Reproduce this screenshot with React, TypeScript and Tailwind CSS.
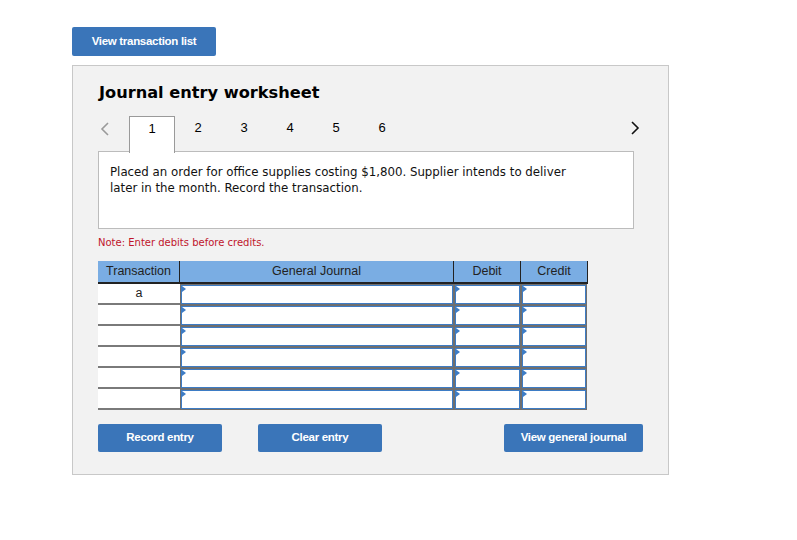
import React from 'react'

const TABS = [1, 2, 3, 4, 5, 6]
const ROWS = ['a', '', '', '', '', '']

const btn =
  'flex h-[28px] items-center justify-center rounded-[2px] bg-[#3a75b9] text-[11.5px] font-bold tracking-[-0.3px] text-white'

function InputCell({ w }: { w: string }) {
  return (
    <div className={`relative h-full ${w} border border-[#6f6f6f]`}>
      <div className="h-full w-full border-[1.5px] border-[#3d7cc5] bg-white" />
      <span className="absolute left-[1px] top-[1px] h-0 w-0 border-y-[3px] border-l-[4px] border-y-transparent border-l-[#3d7cc5]" />
    </div>
  )
}

export default function App() {
  return (
    <div className="min-h-screen bg-white pl-[72px] pt-[27px] font-['Liberation_Sans',Arial,sans-serif]">
      <button className={`${btn} h-[29px] w-[144px]`}>View transaction list</button>

      <div className="mt-[9px] h-[410px] w-[597px] border border-[#c8c8c8] bg-[#f2f2f2] pl-[25px] pt-[16px]">
        <h1 className="ml-px font-['DejaVu_Sans',Verdana,sans-serif] text-[16.2px] font-bold leading-[22px] text-black">
          Journal entry worksheet
        </h1>

        <div className="mt-[12px] flex h-[37px] w-[542px] items-center">
          <div className="mb-[12px] flex w-[31px] items-center pl-[2px]">
            <svg width="10" height="14" viewBox="0 0 10 14">
              <polyline points="8,1 2,7 8,13" fill="none" stroke="#9a9a9a" strokeWidth="1.6" />
            </svg>
          </div>
          {TABS.map((t) => (
            <div
              key={t}
              className={`flex h-[37px] w-[46px] items-center justify-center pb-[13px] text-[13px] text-black ${
                t === 1 ? 'relative z-10 border-x border-t border-[#9a9a9a] bg-white' : ''
              }`}
            >
              {t}
            </div>
          ))}
          <div className="flex-1" />
          <svg width="10" height="14" viewBox="0 0 10 14" className="mb-[13px]">
            <polyline points="2,1 8,7 2,13" fill="none" stroke="#111" strokeWidth="1.6" />
          </svg>
        </div>

        <div className="-mt-[2px] h-[78px] w-[536px] border border-[#bcbcbc] bg-white px-[11px] pt-[12px] font-['DejaVu_Sans',Verdana,sans-serif] text-[11.8px] leading-[16px] text-[#111]">
          Placed an order for office supplies costing $1,800. Supplier intends to deliver
          <br />
          later in the month. Record the transaction.
        </div>

        <p className="mt-[8px] font-['DejaVu_Sans',Verdana,sans-serif] text-[10px] leading-[12px] text-[#c0152b]">
          Note: Enter debits before credits.
        </p>

        <div className="mt-[12px] w-[490px]">
          <div className="flex h-[23px] border-b-2 border-r border-[#222] bg-[#7aade3] text-[12.5px] text-[#222]">
            <div className="flex w-[82px] items-center justify-center border-r border-[#222]">Transaction</div>
            <div className="flex w-[274px] items-center justify-center border-r border-[#222]">General Journal</div>
            <div className="flex w-[67px] items-center justify-center border-r border-[#222]">Debit</div>
            <div className="flex flex-1 items-center justify-center">Credit</div>
          </div>
          {ROWS.map((r, i) => (
            <div key={i} className="flex h-[21px]">
              <div className="flex w-[82px] items-center justify-center border-b-2 border-[#7a7a7a] bg-white text-[12.5px] text-[#222]">
                {r}
              </div>
              <InputCell w="w-[274px]" />
              <InputCell w="w-[67px]" />
              <InputCell w="w-[66px]" />
            </div>
          ))}
        </div>

        <div className="mt-[14px] flex w-[545px] items-center">
          <button className={`${btn} w-[124px]`}>Record entry</button>
          <button className={`${btn} ml-[36px] w-[124px]`}>Clear entry</button>
          <div className="flex-1" />
          <button className={`${btn} w-[139px]`}>View general journal</button>
        </div>
      </div>
    </div>
  )
}
